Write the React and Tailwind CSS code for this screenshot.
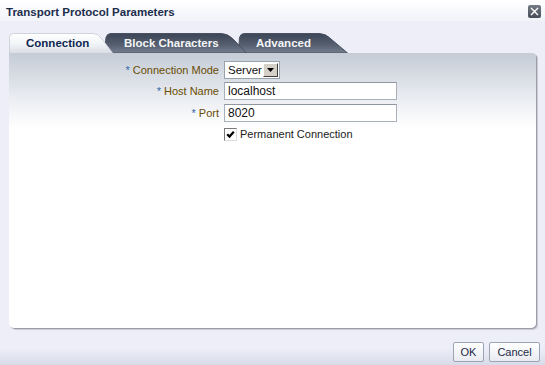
import React from "react";

function Tab({ width, path, dark, label, textLeft, z, ml }) {
  return (
    <div className={`relative h-[20px] ${z} ${ml}`} style={{ width }}>
      <svg className="absolute inset-0" width={width} height="20" viewBox={`0 0 ${width} 20`}>
        <defs>
          <linearGradient id="gLight" x1="0" y1="0" x2="0" y2="1">
            <stop offset="0" stopColor="#ffffff" />
            <stop offset="0.5" stopColor="#f3f5f8" />
            <stop offset="1" stopColor="#d9dee5" />
          </linearGradient>
          <linearGradient id="gDark" x1="0" y1="0" x2="0" y2="1">
            <stop offset="0" stopColor="#3c4555" />
            <stop offset="0.6" stopColor="#566071" />
            <stop offset="1" stopColor="#767e8e" />
          </linearGradient>
        </defs>
        <path d={path} fill={dark ? "url(#gDark)" : "url(#gLight)"} stroke={dark ? "#4a5262" : "#cfd3dc"} strokeWidth="1" />
      </svg>
      <span
        className={`absolute top-[3px] text-[11.5px] font-bold leading-[14px] ${dark ? "text-[#f4f5f8]" : "text-[#0e2650]"}`}
        style={{ left: textLeft }}
      >
        {label}
      </span>
    </div>
  );
}

function Label({ children }) {
  return (
    <div className="w-[210px] text-right text-[11px] leading-[18px] text-[#6a4c03]">
      <span className="text-[#3466a5]">*</span> {children}
    </div>
  );
}

export default function App() {
  return (
    <div
      className="relative flex h-[365px] w-[545px] flex-col overflow-hidden bg-[linear-gradient(to_bottom,#eeeef8_0px,#eeeef8_348px,#d8dbe8_365px)]"
      style={{ fontFamily: '"Liberation Sans", Arial, sans-serif' }}
    >
      {/* Title bar */}
      <div className="flex h-[21px] items-center justify-between bg-[linear-gradient(to_bottom,#ffffff,#f1f3fa)] pl-[6px] pr-[4px]">
        <span className="pt-[4px] text-[11.5px] font-bold text-[#1c2d4d]">Transport Protocol Parameters</span>
        <div className="mt-[1px] flex h-[13px] w-[13px] items-center justify-center rounded-[2px] bg-[linear-gradient(to_bottom,#767c86,#474d58)]">
          <svg width="9" height="9" viewBox="0 0 9 9">
            <path d="M1 1 L8 8 M8 1 L1 8" stroke="#ffffff" strokeWidth="1.4" />
          </svg>
        </div>
      </div>

      {/* Tabs */}
      <div className="ml-[9px] mt-[12px] flex">
        <Tab
          width={104}
          z="z-30"
          ml=""
          label="Connection"
          textLeft={17}
          path="M0.5 20 V4.5 Q0.5 0.5 4.5 0.5 H84 Q89 0.5 93 6 L103.5 20"
        />
        <Tab
          width={143}
          z="z-20"
          ml="-ml-[9px]"
          dark
          label="Block Characters"
          textLeft={20}
          path="M0.5 20 L2 4.5 Q3 0.5 7 0.5 H117 Q124 0.5 129 6 L142.5 20 Z"
        />
        <Tab
          width={110}
          z="z-10"
          ml="-ml-[9px]"
          dark
          label="Advanced"
          textLeft={18}
          path="M0.5 20 L1.5 4.5 Q2.5 0.5 6.5 0.5 H81 Q88 0.5 93 6 L109.5 20 Z"
        />
      </div>

      {/* Panel */}
      <div className="relative z-40 ml-[9px] h-[275px] w-[527px] rounded-tr-[4px] rounded-b-[5px] bg-[linear-gradient(to_bottom,#c5ccd6_0px,#d9dee5_25px,#eef0f4_50px,#ffffff_75px)] shadow-[1px_1px_0_#9a9da8,2px_2px_1px_#c8cad4]">
        <div className="flex flex-col pt-[8px]">
          <div className="flex h-[18px] items-center gap-[5px]">
            <Label>Connection Mode</Label>
            <div className="flex h-[18px] w-[56px] items-center justify-between border border-[#9aa2ad] bg-white pl-[3px] pr-[1px]">
              <span className="text-[11.5px] leading-[16px] text-[#111]">Server</span>
              <div className="flex h-[14px] w-[15px] items-center justify-center border border-b-[#404040] border-l-white border-r-[#404040] border-t-white bg-[#d4d0c8]">
                <svg width="7" height="4" viewBox="0 0 7 4">
                  <path d="M0 0 H7 L3.5 4 Z" fill="#000" />
                </svg>
              </div>
            </div>
          </div>
          <div className="mt-[3px] flex h-[18px] items-center gap-[5px]">
            <Label>Host Name</Label>
            <div className="flex h-[18px] w-[173px] items-center border border-[#a9b0ba] border-t-[#8f97a3] bg-white pl-[3px] text-[12px] text-[#111]">
              localhost
            </div>
          </div>
          <div className="mt-[4px] flex h-[18px] items-center gap-[5px]">
            <Label>Port</Label>
            <div className="flex h-[18px] w-[173px] items-center border border-[#a9b0ba] border-t-[#8f97a3] bg-white pl-[3px] text-[12px] text-[#111]">
              8020
            </div>
          </div>
          <div className="ml-[215px] mt-[6px] flex h-[13px] items-center gap-[3px]">
            <div className="flex h-[13px] w-[13px] items-center justify-center border border-b-[#dcdcdc] border-l-[#7a7a7a] border-r-[#dcdcdc] border-t-[#7a7a7a] bg-white">
              <svg width="9" height="9" viewBox="0 0 9 9">
                <path d="M1.2 4.2 L3.5 6.6 L7.8 1.8" stroke="#000" strokeWidth="2.2" fill="none" />
              </svg>
            </div>
            <span className="text-[11px] leading-[13px] text-[#1a1a1a]">Permanent Connection</span>
          </div>
        </div>
      </div>

      {/* Footer buttons */}
      <div className="mt-[14px] flex justify-end gap-[5px] pr-[5px]">
        <button className="h-[20px] w-[31px] rounded-[2px] border border-[#9ca3b2] bg-[linear-gradient(to_bottom,#ffffff,#e9ebf2)] text-[11px] text-[#1c2a45]">
          OK
        </button>
        <button className="h-[20px] w-[51px] rounded-[2px] border border-[#9ca3b2] bg-[linear-gradient(to_bottom,#ffffff,#e9ebf2)] text-[11px] text-[#1c2a45]">
          Cancel
        </button>
      </div>
    </div>
  );
}
